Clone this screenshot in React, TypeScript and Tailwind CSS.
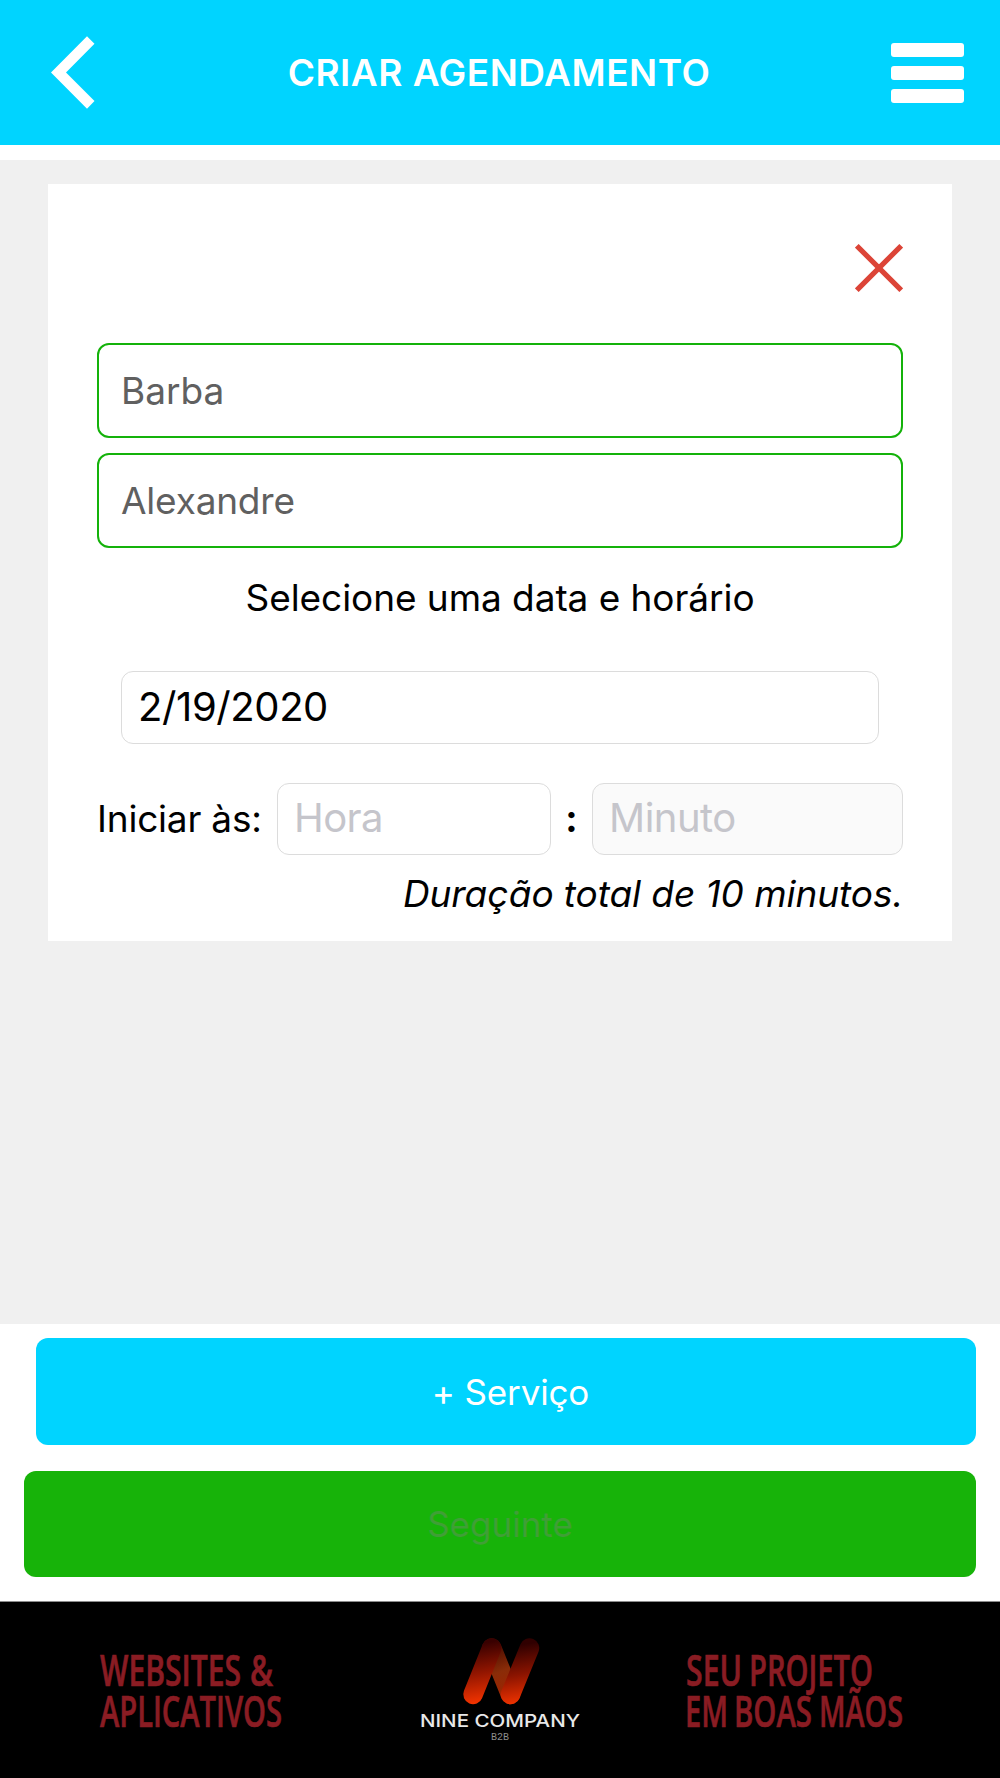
import type { ReactNode } from 'react';

const RED = '#8a1c23';

type Word = { text: string; x: number; width: number };

const BANNER_LINES: { y: number; words: Word[] }[] = [
  { y: 83.5, words: [{ text: 'WEBSITES', x: 100, width: 141 }, { text: '&', x: 250, width: 23 }] },
  { y: 124.5, words: [{ text: 'APLICATIVOS', x: 100, width: 182 }] },
  { y: 83.5, words: [{ text: 'SEU', x: 686, width: 56 }, { text: 'PROJETO', x: 749, width: 124 }] },
  {
    y: 124.5,
    words: [
      { text: 'EM', x: 685, width: 43 },
      { text: 'BOAS', x: 734, width: 78 },
      { text: 'MÃOS', x: 819, width: 84 },
    ],
  },
];

function Header({ title }: { title: string }) {
  return (
    <header className="h-[145px] bg-[#00d4ff] text-white flex items-center justify-between pl-[51px] pr-9">
      <button aria-label="Voltar" className="w-[55px]">
        <svg width="44" height="73" viewBox="0 0 44 73" className="block">
          <path d="M0 36.5 36 .3l7.5 7.5L15 36.5l28.5 28.6-7.5 7.6z" fill="currentColor" />
        </svg>
      </button>
      <h1 className="text-[37px] leading-[45px] font-semibold tracking-[0.5px] pb-px pl-px">{title}</h1>
      <button aria-label="Menu" className="flex flex-col gap-[9px] w-[73px]">
        <span className="h-[14px] rounded-[3px] bg-white" />
        <span className="h-[14px] rounded-[3px] bg-white" />
        <span className="h-[14px] rounded-[3px] bg-white" />
      </button>
    </header>
  );
}

function SelectedField({ children }: { children: ReactNode }) {
  return (
    <div className="h-[95px] flex items-center border-2 border-[#14b20a] rounded-xl px-[22px] text-[37px] leading-[45px] text-[#606060]">
      {children}
    </div>
  );
}

function NineCompanyBanner() {
  return (
    <footer className="h-[177px] bg-black border-t border-[#8c8c8c]">
      <svg width="1000" height="176" viewBox="0 0 1000 176" className="block">
        <defs>
          <linearGradient id="left" gradientUnits="userSpaceOnUse" x1="477" y1="42" x2="487" y2="100">
            <stop offset="0" stopColor="#380000" />
            <stop offset="0.5" stopColor="#941600" />
            <stop offset="1" stopColor="#f43400" />
          </linearGradient>
          <linearGradient id="right" gradientUnits="userSpaceOnUse" x1="514" y1="44" x2="524" y2="102">
            <stop offset="0" stopColor="#300000" />
            <stop offset="0.5" stopColor="#8c1400" />
            <stop offset="1" stopColor="#f43400" />
          </linearGradient>
          <linearGradient id="bridge" gradientUnits="userSpaceOnUse" x1="491" y1="46" x2="510" y2="93">
            <stop offset="0" stopColor="#4a0c00" />
            <stop offset="0.5" stopColor="#8a2c08" />
            <stop offset="1" stopColor="#a02400" />
          </linearGradient>
        </defs>

        {BANNER_LINES.map((line) => (
          <text
            key={line.words[0].text}
            y={line.y}
            fill={RED}
            stroke={RED}
            strokeWidth="0.7"
            fontSize="43"
            fontWeight="600"
            fontFamily="'Open Sans', 'Noto Sans', sans-serif"
          >
            {line.words.map((word) => (
              <tspan key={word.text} x={word.x} textLength={word.width} lengthAdjust="spacingAndGlyphs">
                {word.text}
              </tspan>
            ))}
          </text>
        ))}

        <g fill="none" strokeWidth="19.5" strokeLinecap="round">
          <path d="M491.7 46 510.5 92.5" stroke="url(#bridge)" />
          <path d="M491.7 46 473 92.5" stroke="url(#left)" />
          <path d="M529.5 46 510.5 92.5" stroke="url(#right)" />
        </g>
        <text
          x="420"
          y="125"
          fill="#e8e8e8"
          fontSize="17.5"
          fontWeight="500"
          fontFamily="Inter, sans-serif"
          textLength="160"
          lengthAdjust="spacingAndGlyphs"
        >
          NINE COMPANY
        </text>
        <text
          x="491"
          y="137.5"
          fill="#8e8e8e"
          fontSize="10"
          fontFamily="'Liberation Mono', monospace"
          textLength="18"
        >
          B2B
        </text>
      </svg>
    </footer>
  );
}

export default function App() {
  return (
    <div className="w-[1000px] h-[1778px] flex flex-col bg-white text-black font-['Inter',sans-serif] overflow-hidden">
      <Header title="CRIAR AGENDAMENTO" />

      <main className="mt-[15px] h-[1164px] bg-[#f0f0f0] px-12 pt-6">
        <section className="h-[757px] bg-white px-[49px] pt-[60px]">
          <div className="flex justify-end">
            <button aria-label="Remover" className="text-[#dc4437]">
              <svg width="48" height="48" viewBox="0 0 48 48" className="block">
                <path d="M1.8 1.8 46.2 46.2M46.2 1.8 1.8 46.2" stroke="currentColor" strokeWidth="5.2" fill="none" />
              </svg>
            </button>
          </div>

          <div className="mt-[51px] flex flex-col gap-[15px]">
            <SelectedField>Barba</SelectedField>
            <SelectedField><span className="tracking-[-0.2px]">Alexandre</span></SelectedField>
          </div>

          <p className="mt-[27px] text-center text-[37px] leading-[45px] tracking-[-0.06px]">
            Selecione uma data e horário
          </p>

          <div className="mt-[51px] mx-6 h-[73px] flex items-center border border-[#dcdcdc] rounded-xl px-4 pb-[2px] text-[40px] leading-[49px] tracking-[-0.4px]">
            2/19/2020
          </div>

          <div className="mt-[39px] h-[72px] flex items-center">
            <span className="w-[180px] pb-px text-[37px] leading-[45px] tracking-[-0.2px] whitespace-nowrap">
              Iniciar às:
            </span>
            <div className="w-[274px] h-full flex items-center border border-[#dcdcdc] rounded-xl px-4 pb-[3px] text-[40px] leading-[49px] tracking-[-0.6px] text-[#c5c5cb]">
              Hora
            </div>
            <span className="w-[41px] pb-px text-center text-[37px] leading-[45px] font-bold">:</span>
            <div className="flex-1 h-full flex items-center border border-[#dcdcdc] rounded-xl bg-[#fafafa] px-4 pb-[3px] text-[40px] leading-[49px] tracking-[-0.5px] text-[#c5c5cb]">
              Minuto
            </div>
          </div>

          <p className="mt-4 text-right text-[37px] leading-[45px] tracking-[-0.06px] italic">
            Duração total de 10 minutos.
          </p>
        </section>
      </main>

      <div className="h-[277px] flex flex-col px-6 pt-[14px]">
        <button className="ml-3 h-[107px] rounded-xl bg-[#00d4ff] pl-[9px] text-[35px] leading-[42px] tracking-[-0.15px] text-white">
          + Serviço
        </button>
        <button
          disabled
          className="mt-[26px] h-[106px] rounded-xl bg-[#17b309] text-[35px] leading-[42px] text-[#3f9f36]"
        >
          Seguinte
        </button>
      </div>

      <NineCompanyBanner />
    </div>
  );
}
